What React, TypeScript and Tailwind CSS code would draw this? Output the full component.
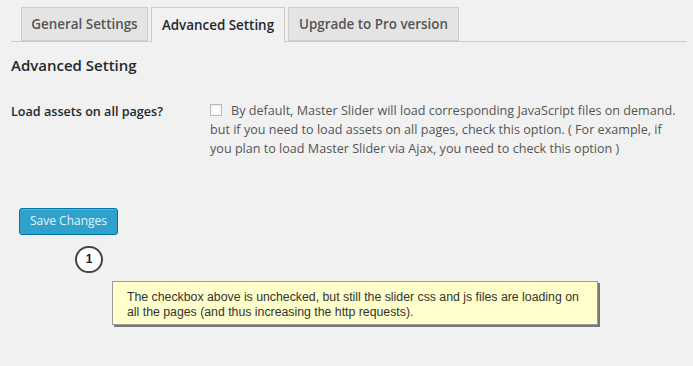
const tabs = [
  { label: "General Settings", active: false, w: "w-[127px]" },
  { label: "Advanced Setting", active: true, w: "w-[134px]" },
  { label: "Upgrade to Pro version", active: false, w: "w-[171px]" },
];

export default function App() {
  return (
    <div className="h-[366px] w-[693px] overflow-hidden bg-[#f1f1f1] font-['Open_Sans',sans-serif]">
      <div className="ml-[11px] mr-[6px] flex gap-[3px] border-b border-[#cccccc] pl-[10px] pt-[7px]">
        {tabs.map((t) => (
          <div
            key={t.label}
            className={
              t.active
                ? `-mb-px flex h-[35px] items-center justify-center border border-b-0 border-[#cccccc] bg-[#f1f1f1] text-[13.4px] font-semibold text-[#23282d] ${t.w}`
                : `flex h-[34px] items-center justify-center border border-[#cccccc] bg-[#e4e4e4] text-[13.4px] font-semibold text-[#555555] ${t.w}`
            }
          >
            {t.label}
          </div>
        ))}
      </div>

      <div className="px-[11px]">
        <h2 className="mt-[12px] text-[15px] font-semibold text-[#23282d]">Advanced Setting</h2>

        <div className="mt-[24px] flex">
          <div className="w-[199px] shrink-0 pt-[1px] text-[12.6px] font-semibold leading-[19px] text-[#23282d]">
            Load assets on all pages?
          </div>
          <p className="w-[475px] text-[12.6px] leading-[19px] text-[#555555]">
            <span className="mr-[9px] inline-block h-[12px] w-[12px] border border-[#b4b9be] bg-[#fbfbfb] align-[-1px] shadow-[inset_0_1px_2px_rgba(0,0,0,0.07)]" />
            By default, Master Slider will load corresponding JavaScript files on demand. but if you need to load assets on all pages, check this option. ( For example, if you plan to load Master Slider via Ajax, you need to check this option )
          </p>
        </div>

        <button className="ml-[8px] mt-[50px] h-[27px] w-[99px] rounded-[3px] border border-[#0074a2] bg-[#2ea2cc] text-[12px] text-[#e6f4fa] shadow-[inset_0_1px_0_rgba(120,200,230,0.5)]">
          Save Changes
        </button>

        <div className="ml-[64px] mt-[11px] flex h-[27px] w-[28px] items-center justify-center rounded-full border-2 border-[#444444] bg-white font-['Liberation_Sans',sans-serif] text-[12px] font-bold text-[#1a1a3a]">
          1
        </div>

        <div className="ml-[101px] mt-[8px] w-[486px] border border-[#999999] bg-[#ffffcc] pb-[4px] pl-[14px] pr-[16px] pt-[8px] font-['Liberation_Sans',sans-serif] text-[12.3px] leading-[15px] text-[#333333] shadow-[2px_2px_0_#777777]">
          The checkbox above is unchecked, but still the slider css and js files are loading on all the pages (and thus increasing the http requests).
        </div>
      </div>
    </div>
  );
}
